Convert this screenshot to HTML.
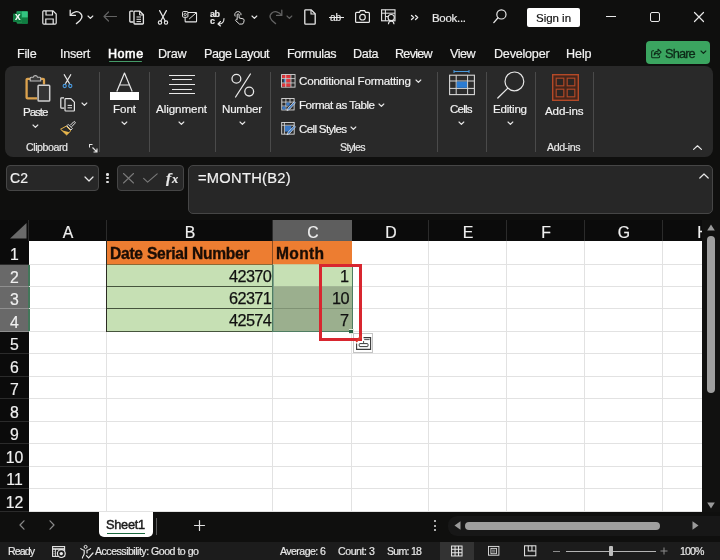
<!DOCTYPE html>
<html lang="en">
<head>
<meta charset="utf-8">
<title>Book1 - Excel</title>
<style>
*{box-sizing:border-box;margin:0;padding:0}
html,body{width:720px;height:560px;overflow:hidden;background:#0f0f0e}
body{position:relative;font-family:"Liberation Sans",sans-serif;color:#fff}
.abs{position:absolute}
.t{-webkit-text-stroke:0.18px;will-change:transform;position:absolute;white-space:nowrap;line-height:1.16;color:#f2f2f2}
svg{position:absolute;overflow:visible}
#ribbon{left:5px;top:66px;width:708px;height:91px;background:#292929;border-radius:8px}
.sep{position:absolute;top:72px;width:1px;height:80px;background:#4a4a4a}
.box{position:absolute;background:#272727;border:1px solid #464646;border-radius:4px}
#grid{left:0;top:220px;width:702px;height:292px;background:#fff;overflow:hidden}
.ch{position:absolute;top:0;background:#0b0b0b;border-right:1px solid #2b2b2b}
.ch.sel{background:#5e5e5e;border-right:0}
.rh{position:absolute;left:0;width:29px;background:#0b0b0b;border-bottom:1px solid #2b2b2b}
.rh.sel{background:#696969;width:30px;border-right:2px solid #42775a;border-bottom:1px solid #8f8f8f}
.vl{position:absolute;width:1px;height:271px;background:#e2e2e2}
.hl{position:absolute;left:29px;height:1px;width:673px;background:#e2e2e2}
#tabs{left:0;top:512px;width:720px;height:29px;background:#0f0f0e}
#status{left:0;top:541.5px;width:720px;height:19px;background:#1c1c1c}
.hb{-webkit-text-stroke:0.35px #1a0d05}
.nb{-webkit-text-stroke:0.25px #111}
.sb{-webkit-text-stroke:0.3px #0d2a18}
.sh{-webkit-text-stroke:0.45px #1a1a1a}
.hm{-webkit-text-stroke:0.55px #fff}

</style>
</head>
<body>
<svg style="left:13px;top:9.6px" width="15.2" height="15.2" viewBox="0 0 17 16"><rect x="4" y="1" width="12.5" height="14" rx="1.5" fill="#1e8f4e"/><rect x="10" y="1" width="6.5" height="7" fill="#33c481"/><rect x="10" y="8" width="6.5" height="7" fill="#107c41"/><rect x="4" y="1" width="6" height="7" fill="#21a366"/><rect x="0" y="3.5" width="9.5" height="9.5" rx="1" fill="#107c41"/></svg>
<div class="t" style="left:14.6px;top:12.9px;font-size:8.2px;font-weight:bold;color:#fff">X</div>
<svg style="left:42px;top:9.6px" width="15" height="15" viewBox="0 0 15 15"><path d="M1.5 0.8H11L14.2 4V13A1.2 1.2 0 0 1 13 14.2H2A1.2 1.2 0 0 1 0.8 13V2A1.2 1.2 0 0 1 1.5 0.8Z" fill="none" stroke="#e8e8e8" stroke-width="1.2"/><path d="M4 1V5H10.5V1" fill="none" stroke="#e8e8e8" stroke-width="1.2"/><path d="M3.8 14V9H11.2V14" fill="none" stroke="#e8e8e8" stroke-width="1.2"/></svg>
<svg style="left:69px;top:9.3px" width="15" height="16" viewBox="0 0 15 16"><path d="M1.2 1.2V6.4H6.4" fill="none" stroke="#e8e8e8" stroke-width="1.3" stroke-linecap="round" stroke-linejoin="round"/><path d="M1.6 6C4 2.6 8.6 1.6 11.4 4.2C14.2 6.8 13.4 10.6 7.4 14.6" fill="none" stroke="#e8e8e8" stroke-width="1.3" stroke-linecap="round"/></svg>
<svg style="left:88.1px;top:15.600000000000001px" width="4.8" height="2.4" viewBox="0 0 4.8 2.4"><path d="M0 0L2.4 2.4L4.8 0" fill="none" stroke="#e8e8e8" stroke-width="1.15" stroke-linecap="round" stroke-linejoin="round"/></svg>
<svg style="left:103.3px;top:11.2px" width="14" height="11" viewBox="0 0 14 11"><path d="M13.5 5.5H1M5.5 1L1 5.5L5.5 10" fill="none" stroke="#636363" stroke-width="1.2" stroke-linecap="round" stroke-linejoin="round"/></svg>
<svg style="left:129px;top:9.3px" width="16" height="16" viewBox="0 0 16 16"><path d="M4.2 2.2H1.6A0.8 0.8 0 0 0 0.8 3V12.2A0.8 0.8 0 0 0 1.6 13H4.4" fill="none" stroke="#e8e8e8" stroke-width="1.3"/><path d="M5.8 2.2H10.8L14.4 5.8V14.2A0.8 0.8 0 0 1 13.6 15H5.8A0.8 0.8 0 0 1 5 14.2V3A0.8 0.8 0 0 1 5.8 2.2Z" fill="none" stroke="#e8e8e8" stroke-width="1.3"/><path d="M7.5 8H12M7.5 10.3H12M7.5 12.6H12" stroke="#e8e8e8" stroke-width="1"/><path d="M10.6 2.4V6H14.2" fill="none" stroke="#e8e8e8" stroke-width="1"/></svg>
<svg style="left:157px;top:9.6px" width="11.4" height="15.2" viewBox="0 0 11.4 15.2"><path d="M2.6 0.6L8.2 11M9.4 0.6L3.8 11" stroke="#e8e8e8" stroke-width="1.2" stroke-linecap="round"/><circle cx="3" cy="12.6" r="1.7" fill="none" stroke="#e8e8e8" stroke-width="1.1"/><circle cx="9" cy="12.6" r="1.7" fill="none" stroke="#e8e8e8" stroke-width="1.1"/></svg>
<svg style="left:181.8px;top:10.5px" width="15.2" height="11.6" viewBox="0 0 17 13"><rect x="3.5" y="1.6" width="12.8" height="10.6" rx="0.8" fill="none" stroke="#e8e8e8" stroke-width="1.2"/><path d="M8 9L16 2" stroke="#e8e8e8" stroke-width="1.1"/><rect x="0.6" y="0.6" width="6" height="6.4" rx="1" fill="#0f0f0e" stroke="#e8e8e8" stroke-width="1.1"/><circle cx="3.6" cy="3.8" r="1.3" fill="none" stroke="#e8e8e8" stroke-width="1"/></svg>
<div class="t" style="left:210px;top:9px;font-size:9px;font-weight:bold;color:#ececec;letter-spacing:-0.5px">ab</div>
<div class="t" style="left:210px;top:16px;font-size:9px;font-weight:bold;color:#ececec">c</div>
<svg style="left:215px;top:18.3px" width="10" height="8" viewBox="0 0 10 8"><path d="M9 0.5C9 4 7 6 3.5 6M5.5 3.5L3 6L5.5 8" fill="none" stroke="#e8e8e8" stroke-width="1.1" stroke-linecap="round" stroke-linejoin="round"/></svg>
<svg style="left:233px;top:9.5px" width="12.2" height="15.6" viewBox="0 0 14 16"><path d="M2.6 6.4A3.6 3.6 0 1 1 9.2 5" fill="none" stroke="#e8e8e8" stroke-width="1.1"/><path d="M4.8 9.5V4.6A1.1 1.1 0 0 1 7 4.6V8.2L11.6 9.2A1.6 1.6 0 0 1 12.8 10.8L12.2 13.6A2 2 0 0 1 10.2 15.2H7.4L3.2 11.4A1 1 0 0 1 4.8 10.2Z" fill="none" stroke="#e8e8e8" stroke-width="1.1" stroke-linejoin="round"/></svg>
<svg style="left:252.1px;top:15.600000000000001px" width="4.8" height="2.4" viewBox="0 0 4.8 2.4"><path d="M0 0L2.4 2.4L4.8 0" fill="none" stroke="#e8e8e8" stroke-width="1.15" stroke-linecap="round" stroke-linejoin="round"/></svg>
<svg style="left:268px;top:9.3px" width="15" height="16" viewBox="0 0 15 16"><path d="M13.8 1.2V6.4H8.6" fill="none" stroke="#636363" stroke-width="1.3" stroke-linecap="round" stroke-linejoin="round"/><path d="M13.4 6C11 2.6 6.4 1.6 3.6 4.2C0.8 6.8 1.6 10.6 7.6 14.6" fill="none" stroke="#636363" stroke-width="1.3" stroke-linecap="round"/></svg>
<svg style="left:287.1px;top:15.600000000000001px" width="4.8" height="2.4" viewBox="0 0 4.8 2.4"><path d="M0 0L2.4 2.4L4.8 0" fill="none" stroke="#636363" stroke-width="1.15" stroke-linecap="round" stroke-linejoin="round"/></svg>
<svg style="left:304px;top:9.3px" width="12" height="16" viewBox="0 0 12 16"><path d="M1.6 0.8H7.2L11.2 4.8V14.4A0.8 0.8 0 0 1 10.4 15.2H1.6A0.8 0.8 0 0 1 0.8 14.4V1.6A0.8 0.8 0 0 1 1.6 0.8Z" fill="none" stroke="#e8e8e8" stroke-width="1.3"/><path d="M7 1V5H11" fill="none" stroke="#e8e8e8" stroke-width="1.1"/></svg>
<div class="t" style="left:330.3px;top:11.6px;font-size:10.2px;color:#e8e8e8;letter-spacing:-0.1px">ab</div>
<div class="abs" style="left:328.5px;top:17px;width:15.5px;height:1px;background:#e8e8e8"></div>
<svg style="left:355px;top:10.3px" width="15" height="14" viewBox="0 0 15 14"><path d="M0.6 3.4V11.4A1 1 0 0 0 1.6 12.4H13.4A1 1 0 0 0 14.4 11.4V3.4A1 1 0 0 0 13.4 2.4H10.6L9.6 0.6H5.4L4.4 2.4H1.6A1 1 0 0 0 0.6 3.4Z" fill="none" stroke="#e8e8e8" stroke-width="1.2"/><circle cx="7.5" cy="7.2" r="2.8" fill="none" stroke="#e8e8e8" stroke-width="1.2"/></svg>
<svg style="left:381px;top:9.3px" width="16" height="16" viewBox="0 0 16 16"><rect x="0.6" y="0.8" width="13.4" height="11" fill="none" stroke="#e8e8e8" stroke-width="1.1"/><path d="M0.6 4.2H14M4.4 0.8V11.8M4.4 7.6H8" stroke="#e8e8e8" stroke-width="1"/><circle cx="10.2" cy="8.6" r="3.1" fill="#0f0f0e" stroke="#e8e8e8" stroke-width="1.2"/><path d="M7.4 15.2C7.6 12.8 8.8 12 10.2 12C11.6 12 12.8 12.8 13 15.2" fill="none" stroke="#e8e8e8" stroke-width="1.1"/></svg>
<svg style="left:411px;top:15.4px" width="7.4" height="4.8" viewBox="0 0 7.4 4.8"><path d="M0.5 0.5L2.7 2.5L0.5 4.5M4.5 0.5L6.7 2.5L4.5 4.5" fill="none" stroke="#e8e8e8" stroke-width="1.3" stroke-linecap="round" stroke-linejoin="round"/></svg>
<div id="t2" class="t " style="left:432.43px;top:11.62px;font-size:11.5px;color:#eaeaea;letter-spacing:-0.296px;">Book...</div>
<svg style="left:493px;top:9.3px" width="14" height="15" viewBox="0 0 14 15"><circle cx="8.4" cy="5.4" r="4.6" fill="none" stroke="#e8e8e8" stroke-width="1.2"/><path d="M5 8.8L0.8 13.6" stroke="#e8e8e8" stroke-width="1.3" stroke-linecap="round"/></svg>
<div class="abs" style="left:527px;top:8px;width:53px;height:19px;background:#fff;border-radius:2px"></div>
<div id="t3" class="t " style="left:535.92px;top:11.62px;font-size:11.5px;color:#111;letter-spacing:-0.023px;">Sign in</div>
<div class="abs" style="left:606px;top:16px;width:10px;height:1.2px;background:#e8e8e8"></div>
<div class="abs" style="left:650px;top:12px;width:10px;height:10px;border:1.2px solid #e8e8e8;border-radius:2px"></div>
<svg style="left:694px;top:12.4px" width="10" height="10" viewBox="0 0 10 10"><path d="M0.5 0.5L9.5 9.5M9.5 0.5L0.5 9.5" stroke="#e8e8e8" stroke-width="1.2" stroke-linecap="round"/></svg>
<div id="t4" class="t " style="left:17.37px;top:47.01px;font-size:12.6px;color:#f2f2f2;letter-spacing:-0.221px;">File</div>
<div id="t5" class="t " style="left:60.37px;top:47.01px;font-size:12.6px;color:#f2f2f2;letter-spacing:-0.273px;">Insert</div>
<div id="t6" class="t hm" style="left:107.87px;top:47.01px;font-size:12.6px;color:#ffffff;letter-spacing:0.513px;">Home</div>
<div class="abs" style="left:109px;top:60.6px;width:33px;height:1.8px;background:#459a68;border-radius:1px"></div>
<div id="t7" class="t " style="left:158.37px;top:47.01px;font-size:12.6px;color:#f2f2f2;letter-spacing:-0.252px;">Draw</div>
<div id="t8" class="t " style="left:203.87px;top:47.01px;font-size:12.6px;color:#f2f2f2;letter-spacing:-0.510px;">Page Layout</div>
<div id="t9" class="t " style="left:287.37px;top:47.01px;font-size:12.6px;color:#f2f2f2;letter-spacing:-0.407px;">Formulas</div>
<div id="t10" class="t " style="left:353.37px;top:47.01px;font-size:12.6px;color:#f2f2f2;letter-spacing:-0.325px;">Data</div>
<div id="t11" class="t " style="left:395.37px;top:47.01px;font-size:12.6px;color:#f2f2f2;letter-spacing:-0.733px;">Review</div>
<div id="t12" class="t " style="left:450.37px;top:47.01px;font-size:12.6px;color:#f2f2f2;letter-spacing:-0.481px;">View</div>
<div id="t13" class="t " style="left:493.87px;top:47.01px;font-size:12.6px;color:#f2f2f2;letter-spacing:-0.222px;">Developer</div>
<div id="t14" class="t " style="left:566.37px;top:47.01px;font-size:12.6px;color:#f2f2f2;letter-spacing:-0.091px;">Help</div>
<div class="abs" style="left:646px;top:41px;width:64px;height:23px;background:#3ba560;border-radius:4px"></div>
<svg style="left:651px;top:47.5px" width="10.5" height="10.5" viewBox="0 0 12 12"><path d="M3.4 3.2H2A1.2 1.2 0 0 0 0.8 4.4V10A1.2 1.2 0 0 0 2 11.2H8.6A1.2 1.2 0 0 0 9.8 10V8.6" fill="none" stroke="#0d2a18" stroke-width="1.2"/><path d="M3.6 8C3.8 5.4 5.4 3.8 8 3.8V1.4L11.6 4.8L8 8.2V5.8C6 5.8 4.6 6.4 3.6 8Z" fill="none" stroke="#0d2a18" stroke-width="1.2" stroke-linejoin="round"/></svg>
<div id="t15" class="t sb" style="left:664.86px;top:46.58px;font-size:12.8px;color:#0d2a18;letter-spacing:-0.876px;">Share</div>
<svg style="left:700.5px;top:51.4px" width="4.8" height="2.4" viewBox="0 0 4.8 2.4"><path d="M0 0L2.4 2.4L4.8 0" fill="none" stroke="#0d2a18" stroke-width="1.15" stroke-linecap="round" stroke-linejoin="round"/></svg>
<div id="ribbon" class="abs"></div>
<div class="sep" style="left:99px"></div>
<div class="sep" style="left:149px"></div>
<div class="sep" style="left:215px"></div>
<div class="sep" style="left:270px"></div>
<div class="sep" style="left:437px"></div>
<div class="sep" style="left:486px"></div>
<div class="sep" style="left:535px"></div>
<div class="sep" style="left:593px"></div>
<svg style="left:24px;top:72px" width="28" height="31" viewBox="0 0 28 31"><path d="M7 6.8H3.6A1 1 0 0 0 2.6 7.8V25.4A1 1 0 0 0 3.6 26.4H13" fill="none" stroke="#dba24e" stroke-width="2.3"/><path d="M16 6.8H19A1 1 0 0 1 20 7.8V12.4" fill="none" stroke="#dba24e" stroke-width="2.3"/><path d="M6.2 9V6.2A0.9 0.9 0 0 1 7.1 5.3H9.2A2.3 2.3 0 0 1 13.6 5.3H15.8A0.9 0.9 0 0 1 16.7 6.2V9Z" fill="#3a3a3a" stroke="#bdbdbd" stroke-width="1.1"/><rect x="14.1" y="13.2" width="11.6" height="15.8" rx="0.8" fill="#353535" stroke="#cfcfcf" stroke-width="1.5"/></svg>
<div id="t16" class="t " style="left:23.02px;top:105.15px;font-size:11.6px;color:#f2f2f2;letter-spacing:-1.053px;">Paste</div>
<svg style="left:33.1px;top:125.3px" width="4.8" height="2.4" viewBox="0 0 4.8 2.4"><path d="M0 0L2.4 2.4L4.8 0" fill="none" stroke="#e8e8e8" stroke-width="1.15" stroke-linecap="round" stroke-linejoin="round"/></svg>
<svg style="left:62px;top:74px" width="11" height="15" viewBox="0 0 11 15"><path d="M2.2 0.6L7.4 9.4M8.8 0.6L3.6 9.4" stroke="#e8e8e8" stroke-width="1.1" stroke-linecap="round"/><circle cx="2.7" cy="12" r="1.6" fill="none" stroke="#4a9be0" stroke-width="1.1"/><circle cx="8.3" cy="12" r="1.6" fill="none" stroke="#4a9be0" stroke-width="1.1"/></svg>
<svg style="left:59.6px;top:96.4px" width="16" height="16" viewBox="0 0 16 16"><path d="M4 1.8H1.6A0.8 0.8 0 0 0 0.8 2.6V11.4A0.8 0.8 0 0 0 1.6 12.2H4.2" fill="none" stroke="#e8e8e8" stroke-width="1.2"/><path d="M5.8 2.6H10.8L14.4 6.2V14.2A0.8 0.8 0 0 1 13.6 15H5.8A0.8 0.8 0 0 1 5 14.2V3.4A0.8 0.8 0 0 1 5.8 2.6Z" fill="none" stroke="#e8e8e8" stroke-width="1.2"/><path d="M7.6 9.4H12M7.6 11.8H12" stroke="#e8e8e8" stroke-width="1"/></svg>
<svg style="left:82.1px;top:103.3px" width="4.8" height="2.4" viewBox="0 0 4.8 2.4"><path d="M0 0L2.4 2.4L4.8 0" fill="none" stroke="#e8e8e8" stroke-width="1.15" stroke-linecap="round" stroke-linejoin="round"/></svg>
<svg style="left:60px;top:120.6px" width="16" height="15" viewBox="0 0 16 15"><path d="M10.2 4.4L13.6 0.9A0.9 0.9 0 0 1 15 2.2L11.6 5.8" fill="none" stroke="#e4e4e4" stroke-width="1"/><path d="M8.2 3.4L12.4 7.6L11 9L6.8 4.8Z" fill="#2c2c2c" stroke="#e4e4e4" stroke-width="0.9" stroke-linejoin="round"/><path d="M6.2 5.2L10.8 9.8L6.6 13.9L0.6 8.2Z" fill="none" stroke="#e8b64c" stroke-width="1" stroke-linejoin="round"/><path d="M2.6 9.6L9.4 11.2L6.6 13.9L0.9 8.6Z" fill="#e8b64c"/></svg>
<div id="t17" class="t " style="left:26.47px;top:141.29px;font-size:10.6px;color:#e8e8e8;letter-spacing:-0.426px;">Clipboard</div>
<svg style="left:89px;top:144px" width="9" height="9" viewBox="0 0 9 9"><path d="M0.5 3V0.5H3M0.5 0.5" fill="none" stroke="#e8e8e8" stroke-width="1"/><path d="M0.5 3.5V0.5H3.5" fill="none" stroke="#e8e8e8" stroke-width="1"/><path d="M3.5 3.5L8 8M8 4.5V8H4.5" fill="none" stroke="#e8e8e8" stroke-width="1.1"/></svg>
<svg style="left:116px;top:72px" width="17" height="20" viewBox="0 0 17 20"><path d="M0.8 19.4L8.5 1L16.2 19.4M3.6 13H13.4" fill="none" stroke="#e8e8e8" stroke-width="1.2" stroke-linejoin="round"/></svg>
<div class="abs" style="left:110px;top:92.2px;width:29px;height:7.8px;background:#fff"></div>
<div id="t18" class="t " style="left:113.42px;top:102.15px;font-size:11.6px;color:#f2f2f2;letter-spacing:-0.053px;">Font</div>
<svg style="left:122.1px;top:122.3px" width="4.8" height="2.4" viewBox="0 0 4.8 2.4"><path d="M0 0L2.4 2.4L4.8 0" fill="none" stroke="#e8e8e8" stroke-width="1.15" stroke-linecap="round" stroke-linejoin="round"/></svg>
<div class="abs" style="left:169px;top:74.7px;width:26px;height:1.2px;background:#e8e8e8"></div>
<div class="abs" style="left:172px;top:79.3px;width:20px;height:1.2px;background:#e8e8e8"></div>
<div class="abs" style="left:169px;top:83.9px;width:26px;height:1.2px;background:#e8e8e8"></div>
<div class="abs" style="left:172px;top:88.5px;width:20px;height:1.2px;background:#e8e8e8"></div>
<div class="abs" style="left:169px;top:93.1px;width:26px;height:1.2px;background:#e8e8e8"></div>
<div id="t19" class="t " style="left:156.42px;top:102.15px;font-size:11.6px;color:#f2f2f2;letter-spacing:-0.065px;">Alignment</div>
<svg style="left:179.1px;top:122.3px" width="4.8" height="2.4" viewBox="0 0 4.8 2.4"><path d="M0 0L2.4 2.4L4.8 0" fill="none" stroke="#e8e8e8" stroke-width="1.15" stroke-linecap="round" stroke-linejoin="round"/></svg>
<svg style="left:231px;top:73px" width="24" height="25" viewBox="0 0 24 25"><circle cx="5.4" cy="5.8" r="4.4" fill="none" stroke="#e8e8e8" stroke-width="1.3"/><circle cx="18.2" cy="18.6" r="4.4" fill="none" stroke="#e8e8e8" stroke-width="1.3"/><path d="M19.4 1L4.6 24" stroke="#e8e8e8" stroke-width="1.3" stroke-linecap="round"/></svg>
<div id="t20" class="t " style="left:222.42px;top:102.15px;font-size:11.6px;color:#f2f2f2;letter-spacing:-0.241px;">Number</div>
<svg style="left:240.1px;top:122.3px" width="4.8" height="2.4" viewBox="0 0 4.8 2.4"><path d="M0 0L2.4 2.4L4.8 0" fill="none" stroke="#e8e8e8" stroke-width="1.15" stroke-linecap="round" stroke-linejoin="round"/></svg>
<svg style="left:281.4px;top:73.8px" width="14.6" height="13.7" viewBox="0 0 16 15"><rect x="0.6" y="0.6" width="14.8" height="13.8" fill="#2c2c2c" stroke="#d6d6d6" stroke-width="1"/><rect x="1.2" y="1.2" width="9.4" height="3.4" fill="#e0353b"/><rect x="1.2" y="10.2" width="9.4" height="3.6" fill="#e0353b"/><rect x="5.4" y="5.4" width="5.2" height="4" fill="#e0353b"/><rect x="3" y="5.4" width="2.2" height="4" fill="#3b78c4"/><path d="M0.6 5H15.4M0.6 9.8H15.4M5.2 0.6V14.4M10.9 0.6V14.4" stroke="#d6d6d6" stroke-width="0.9"/></svg>
<div id="t21" class="t " style="left:299.42px;top:74.15px;font-size:11.6px;color:#f2f2f2;letter-spacing:-0.219px;">Conditional Formatting</div>
<svg style="left:416.1px;top:80.3px" width="4.8" height="2.4" viewBox="0 0 4.8 2.4"><path d="M0 0L2.4 2.4L4.8 0" fill="none" stroke="#e8e8e8" stroke-width="1.15" stroke-linecap="round" stroke-linejoin="round"/></svg>
<svg style="left:281.4px;top:98.1px" width="14.8" height="13.4" viewBox="0 0 16 15"><rect x="0.6" y="0.6" width="13.8" height="12.8" fill="#2c2c2c" stroke="#dcdcdc" stroke-width="1"/><path d="M0.6 4.6H14.4M0.6 9H8M5.2 0.6V13.4M9.8 0.6V6" stroke="#dcdcdc" stroke-width="0.9"/><rect x="5.7" y="5.1" width="3.8" height="3.5" fill="#3b78c4"/><rect x="1.2" y="9.5" width="3.6" height="3.4" fill="#3b78c4"/><path d="M14.6 4.2L15.8 5.4L9.4 12.6L6.4 14.2L7.6 11.2Z" fill="#3b78c4" stroke="#e8e8e8" stroke-width="0.8" stroke-linejoin="round"/></svg>
<div id="t22" class="t " style="left:299.42px;top:98.15px;font-size:11.6px;color:#f2f2f2;letter-spacing:-0.491px;">Format as Table</div>
<svg style="left:379.1px;top:103.8px" width="4.8" height="2.4" viewBox="0 0 4.8 2.4"><path d="M0 0L2.4 2.4L4.8 0" fill="none" stroke="#e8e8e8" stroke-width="1.15" stroke-linecap="round" stroke-linejoin="round"/></svg>
<svg style="left:281.4px;top:122px" width="14.8" height="13.6" viewBox="0 0 16 15"><rect x="0.6" y="0.6" width="13.8" height="12.8" fill="#2c2c2c" stroke="#dcdcdc" stroke-width="1"/><path d="M0.6 3.6H14.4M3.6 0.6V13.4" stroke="#dcdcdc" stroke-width="0.9"/><rect x="4.2" y="4.2" width="7" height="6.4" fill="#3b78c4"/><path d="M14.6 4.2L15.8 5.4L9.4 12.6L6.4 14.2L7.6 11.2Z" fill="#3b78c4" stroke="#e8e8e8" stroke-width="0.8" stroke-linejoin="round"/></svg>
<div id="t23" class="t " style="left:299.42px;top:121.65px;font-size:11.6px;color:#f2f2f2;letter-spacing:-0.672px;">Cell Styles</div>
<svg style="left:351.1px;top:127.3px" width="4.8" height="2.4" viewBox="0 0 4.8 2.4"><path d="M0 0L2.4 2.4L4.8 0" fill="none" stroke="#e8e8e8" stroke-width="1.15" stroke-linecap="round" stroke-linejoin="round"/></svg>
<div id="t24" class="t " style="left:340.47px;top:141.29px;font-size:10.6px;color:#e8e8e8;letter-spacing:-0.681px;">Styles</div>
<svg style="left:449px;top:70px" width="26" height="25" viewBox="0 0 26 25"><path d="M5 1.5H20M5 0V3M20 0V3" stroke="#4a9be0" stroke-width="1"/><rect x="0.6" y="5.2" width="24.8" height="19.4" fill="#2c2c2c" stroke="#d8d8d8" stroke-width="1.1"/><path d="M0.6 11H25.4M0.6 18.4H25.4M7.2 5.2V24.6M18.6 5.2V24.6" stroke="#d8d8d8" stroke-width="1"/><rect x="7.8" y="11.6" width="10.2" height="6.2" fill="#2b7cd3"/></svg>
<div id="t25" class="t " style="left:450.42px;top:102.15px;font-size:11.6px;color:#f2f2f2;letter-spacing:-0.809px;">Cells</div>
<svg style="left:459.1px;top:122.3px" width="4.8" height="2.4" viewBox="0 0 4.8 2.4"><path d="M0 0L2.4 2.4L4.8 0" fill="none" stroke="#e8e8e8" stroke-width="1.15" stroke-linecap="round" stroke-linejoin="round"/></svg>
<svg style="left:497px;top:71px" width="29" height="27" viewBox="0 0 29 27"><circle cx="17.4" cy="10.4" r="9.4" fill="none" stroke="#e8e8e8" stroke-width="1.2"/><path d="M10.6 17.4L0.8 27" stroke="#e8e8e8" stroke-width="1.3" stroke-linecap="round"/></svg>
<div id="t26" class="t " style="left:493.42px;top:102.15px;font-size:11.6px;color:#f2f2f2;letter-spacing:-0.235px;">Editing</div>
<svg style="left:508.1px;top:122.3px" width="4.8" height="2.4" viewBox="0 0 4.8 2.4"><path d="M0 0L2.4 2.4L4.8 0" fill="none" stroke="#e8e8e8" stroke-width="1.15" stroke-linecap="round" stroke-linejoin="round"/></svg>
<svg style="left:552px;top:74px" width="27" height="27" viewBox="0 0 27 27"><rect x="0.7" y="0.7" width="25.6" height="25.6" fill="#45261b" stroke="#b44a28" stroke-width="1.4"/><rect x="4.2" y="4.2" width="7.6" height="7.6" fill="#2a2624" stroke="#b44a28" stroke-width="1.1"/><rect x="15.2" y="4.2" width="7.6" height="7.6" fill="#2a2624" stroke="#b44a28" stroke-width="1.1"/><rect x="4.2" y="15.2" width="7.6" height="7.6" fill="#2a2624" stroke="#b44a28" stroke-width="1.1"/><rect x="15.2" y="15.2" width="7.6" height="7.6" fill="#2a2624" stroke="#b44a28" stroke-width="1.1"/></svg>
<div id="t27" class="t " style="left:544.92px;top:103.65px;font-size:11.6px;color:#f2f2f2;letter-spacing:-0.128px;">Add-ins</div>
<div id="t28" class="t " style="left:547.47px;top:141.29px;font-size:10.6px;color:#e8e8e8;letter-spacing:-0.411px;">Add-ins</div>
<svg style="left:693px;top:145px" width="9" height="5" viewBox="0 0 9 5"><path d="M0.6 4.4L4.5 0.8L8.4 4.4" fill="none" stroke="#e8e8e8" stroke-width="1.2" stroke-linecap="round" stroke-linejoin="round"/></svg>
<div class="box" style="left:6px;top:165px;width:93px;height:26px"></div>
<div id="t29" class="t " style="left:9.90px;top:170.31px;font-size:14px;color:#f2f2f2;letter-spacing:0.154px;">C2</div>
<svg style="left:84.5px;top:176.5px" width="8" height="4" viewBox="0 0 8 4"><path d="M0 0L4.0 4L8 0" fill="none" stroke="#e8e8e8" stroke-width="1.2" stroke-linecap="round" stroke-linejoin="round"/></svg>
<div class="abs" style="left:106.4px;top:173.0px;width:2.6px;height:2.6px;background:#e0e0e0;border-radius:50%"></div>
<div class="abs" style="left:106.4px;top:176.8px;width:2.6px;height:2.6px;background:#e0e0e0;border-radius:50%"></div>
<div class="abs" style="left:106.4px;top:180.5px;width:2.6px;height:2.6px;background:#e0e0e0;border-radius:50%"></div>
<div class="box" style="left:117px;top:165px;width:67px;height:26px"></div>
<svg style="left:123px;top:173px" width="11" height="10.5" viewBox="0 0 11 10.5"><path d="M0.5 0.5L10.5 10M10.5 0.5L0.5 10" stroke="#7a7a7a" stroke-width="1.1" stroke-linecap="round"/></svg>
<svg style="left:143px;top:173px" width="15" height="10" viewBox="0 0 15 10"><path d="M0.6 5.4L4.6 9.2L14.2 0.8" fill="none" stroke="#7a7a7a" stroke-width="1.1" stroke-linecap="round" stroke-linejoin="round"/></svg>
<div class="t" style="left:166px;top:168.6px;font-size:15.5px;font-weight:bold;font-style:italic;font-family:'Liberation Serif',serif;color:#e8e8e8;letter-spacing:-0.5px">f</div>
<div class="t" style="left:171.6px;top:172px;font-size:12.5px;font-weight:bold;font-style:italic;font-family:'Liberation Serif',serif;color:#e8e8e8">x</div>
<div class="box" style="left:188px;top:165px;width:525px;height:49px;border-radius:5px"></div>
<div id="t30" class="t " style="left:198.46px;top:170.16px;font-size:14.7px;color:#f2f2f2;letter-spacing:0.272px;">=MONTH(B2)</div>
<svg style="left:699px;top:173px" width="10" height="6" viewBox="0 0 10 6"><path d="M0.8 5L5 1L9.2 5" fill="none" stroke="#e8e8e8" stroke-width="1.2" stroke-linecap="round" stroke-linejoin="round"/></svg>
<div id="grid" class="abs">
<div class="ch" style="left:0;width:29px;height:21px"></div>
<svg style="left:9px;top:3px" width="18" height="16" viewBox="0 0 18 16"><path d="M17.5 0V15.5H1Z" fill="#6a6a6a"/></svg>
<div class="ch" style="left:29px;width:78px;height:21px"></div>
<div class="ch" style="left:107px;width:166px;height:21px"></div>
<div class="ch sel" style="left:273px;width:79px;height:21px"></div>
<div class="ch" style="left:352px;width:77px;height:21px"></div>
<div class="ch" style="left:429px;width:78px;height:21px"></div>
<div class="ch" style="left:507px;width:78px;height:21px"></div>
<div class="ch" style="left:585px;width:78px;height:21px"></div>
<div class="ch" style="left:663px;width:78px;height:21px"></div>
<div class="rh" style="top:21px;height:24px"></div>
<div class="rh sel" style="top:45px;height:22px"></div>
<div class="rh sel" style="top:67px;height:22px"></div>
<div class="rh sel" style="top:89px;height:23px"></div>
<div class="rh" style="top:112px;height:22px"></div>
<div class="rh" style="top:134px;height:23px"></div>
<div class="rh" style="top:157px;height:22px"></div>
<div class="rh" style="top:179px;height:23px"></div>
<div class="rh" style="top:202px;height:22px"></div>
<div class="rh" style="top:224px;height:23px"></div>
<div class="rh" style="top:247px;height:22px"></div>
<div class="rh" style="top:269px;height:23px"></div>
<div class="vl" style="left:106px;top:21px"></div>
<div class="vl" style="left:272px;top:21px"></div>
<div class="vl" style="left:351px;top:21px"></div>
<div class="vl" style="left:428px;top:21px"></div>
<div class="vl" style="left:506px;top:21px"></div>
<div class="vl" style="left:584px;top:21px"></div>
<div class="vl" style="left:662px;top:21px"></div>
<div class="hl" style="top:44px"></div>
<div class="hl" style="top:66px"></div>
<div class="hl" style="top:88px"></div>
<div class="hl" style="top:111px"></div>
<div class="hl" style="top:133px"></div>
<div class="hl" style="top:156px"></div>
<div class="hl" style="top:178px"></div>
<div class="hl" style="top:201px"></div>
<div class="hl" style="top:223px"></div>
<div class="hl" style="top:246px"></div>
<div class="hl" style="top:268px"></div>
<div class="hl" style="top:291px"></div>
<div class="abs" style="left:107px;top:21px;width:245px;height:24px;background:#ed7d31"></div>
<div class="abs" style="left:107px;top:45px;width:166px;height:67px;background:#c6e0b4"></div>
<div class="abs" style="left:273px;top:45px;width:79px;height:22px;background:#c6e0b4"></div>
<div class="abs" style="left:273px;top:67px;width:79px;height:45px;background:#9baf8e"></div>
<div class="abs" style="left:107px;top:66px;width:166px;height:1px;background:#46553d"></div>
<div class="abs" style="left:107px;top:88px;width:166px;height:1px;background:#46553d"></div>
<div class="abs" style="left:107px;top:111px;width:166px;height:1px;background:#46553d"></div>
<div class="abs" style="left:273px;top:66px;width:79px;height:1px;background:#a3b796"></div>
<div class="abs" style="left:273px;top:88px;width:79px;height:1px;background:#7f9274"></div>
<div class="abs" style="left:107px;top:44px;width:166px;height:1px;background:#8a6a38"></div>
<div class="abs" style="left:106px;top:21px;width:1px;height:91px;background:#2b2b22"></div>
<div class="abs" style="left:272px;top:21px;width:1px;height:24px;background:#8a4c20"></div>
<div class="abs" style="left:273px;top:44px;width:79px;height:1px;background:#c9c596"></div>
<div class="abs" style="left:272px;top:44px;width:81px;height:68px;border:1px solid #4f7d62;border-top-color:transparent"></div>
<div class="abs" style="left:273px;top:45px;width:1px;height:66px;background:#7fa08a"></div>
<div class="abs" style="left:348.5px;top:109px;width:5px;height:5px;background:#dfe9d8"></div>
<div class="abs" style="left:349.2px;top:109.7px;width:3.7px;height:3.6px;background:#2a6046"></div>
<div class="abs" style="left:352.8px;top:112.8px;width:20.5px;height:20.5px;background:#fff;border:1px solid #c4c4c4"></div>
<svg style="left:352.8px;top:112.8px" width="20" height="20" viewBox="0 0 20 20"><path d="M10.5 4.6H17.6V16.4H3.6V10.6" fill="none" stroke="#3a3a3a" stroke-width="1.1"/><path d="M11.2 6.6H16.6" stroke="#3a3a3a" stroke-width="0.9"/><path d="M10.6 8V10.4" stroke="#3a3a3a" stroke-width="0.9"/><rect x="6.2" y="10.6" width="8.8" height="3" rx="0.6" fill="#fff" stroke="#3a3a3a" stroke-width="1"/></svg>
<div class="abs" style="left:319px;top:44px;width:43px;height:77px;border:3px solid #d8262f"></div>
<svg style="left:355px;top:115px" width="8" height="9" viewBox="0 0 8 9"><path d="M5.5 0L0.6 6.6L1.8 7.6L7 2Z" fill="#dc3a2e"/></svg>
</div>
<div class="t" style="left:48.0px;width:40px;text-align:center;top:223.5px;font-size:15.8px;color:#f0f0f0">A</div>
<div class="t" style="left:170.0px;width:40px;text-align:center;top:223.5px;font-size:15.8px;color:#f0f0f0">B</div>
<div class="t" style="left:292.5px;width:40px;text-align:center;top:223.5px;font-size:15.8px;color:#f0f0f0">C</div>
<div class="t" style="left:370.5px;width:40px;text-align:center;top:223.5px;font-size:15.8px;color:#f0f0f0">D</div>
<div class="t" style="left:448.0px;width:40px;text-align:center;top:223.5px;font-size:15.8px;color:#f0f0f0">E</div>
<div class="t" style="left:526.0px;width:40px;text-align:center;top:223.5px;font-size:15.8px;color:#f0f0f0">F</div>
<div class="t" style="left:604.0px;width:40px;text-align:center;top:223.5px;font-size:15.8px;color:#f0f0f0">G</div>
<div class="t" style="left:682.6px;width:40px;text-align:center;top:223.5px;font-size:15.8px;color:#f0f0f0">H</div>
<div class="t" style="left:0;width:29px;text-align:center;top:246.0px;font-size:15.8px;color:#f0f0f0">1</div>
<div class="t" style="left:0;width:29px;text-align:center;top:269.0px;font-size:15.8px;color:#f0f0f0">2</div>
<div class="t" style="left:0;width:29px;text-align:center;top:291.0px;font-size:15.8px;color:#f0f0f0">3</div>
<div class="t" style="left:0;width:29px;text-align:center;top:313.5px;font-size:15.8px;color:#f0f0f0">4</div>
<div class="t" style="left:0;width:29px;text-align:center;top:336.0px;font-size:15.8px;color:#f0f0f0">5</div>
<div class="t" style="left:0;width:29px;text-align:center;top:358.5px;font-size:15.8px;color:#f0f0f0">6</div>
<div class="t" style="left:0;width:29px;text-align:center;top:381.0px;font-size:15.8px;color:#f0f0f0">7</div>
<div class="t" style="left:0;width:29px;text-align:center;top:403.5px;font-size:15.8px;color:#f0f0f0">8</div>
<div class="t" style="left:0;width:29px;text-align:center;top:426.0px;font-size:15.8px;color:#f0f0f0">9</div>
<div class="t" style="left:0;width:29px;text-align:center;top:448.5px;font-size:15.8px;color:#f0f0f0">10</div>
<div class="t" style="left:0;width:29px;text-align:center;top:471.0px;font-size:15.8px;color:#f0f0f0">11</div>
<div class="t" style="left:0;width:29px;text-align:center;top:493.5px;font-size:15.8px;color:#f0f0f0">12</div>
<div id="t31" class="t hb" style="left:109.82px;top:245.48px;font-size:15.6px;color:#1a0d05;font-weight:bold;letter-spacing:-0.251px;">Date Serial Number</div>
<div id="t32" class="t hb" style="left:276.42px;top:245.48px;font-size:15.6px;color:#1a0d05;font-weight:bold;letter-spacing:0.310px;">Month</div>
<div class="t nb" style="right:449.05px;top:266.8px;font-size:16.3px;letter-spacing:-0.6px;color:#111">42370</div>
<div class="t nb" style="right:371.05px;top:266.8px;font-size:16.3px;letter-spacing:-0.6px;color:#111">1</div>
<div class="t nb" style="right:449.05px;top:288.8px;font-size:16.3px;letter-spacing:-0.6px;color:#111">62371</div>
<div class="t nb" style="right:371.05px;top:288.8px;font-size:16.3px;letter-spacing:-0.6px;color:#111">10</div>
<div class="t nb" style="right:449.05px;top:311.3px;font-size:16.3px;letter-spacing:-0.6px;color:#111">42574</div>
<div class="t nb" style="right:371.05px;top:311.3px;font-size:16.3px;letter-spacing:-0.6px;color:#111">7</div>
<div class="abs" style="left:702px;top:220px;width:18px;height:292px;background:#111110"></div>
<svg style="left:707px;top:224px" width="8" height="7" viewBox="0 0 8 7"><path d="M4 0.5L7.8 6.5H0.2Z" fill="#9a9a9a"/></svg>
<div class="abs" style="left:707px;top:236px;width:8px;height:157px;background:#9e9e9e;border-radius:4px"></div>
<svg style="left:707px;top:502.4px" width="8" height="6.5" viewBox="0 0 8 6.5"><path d="M4 6.5L7.8 0.5H0.2Z" fill="#9a9a9a"/></svg>
<div id="tabs" class="abs"></div>
<svg style="left:19px;top:520px" width="6" height="10" viewBox="0 0 6 10"><path d="M5 0.8L1 5L5 9.2" fill="none" stroke="#8a8a8a" stroke-width="1.2" stroke-linecap="round" stroke-linejoin="round"/></svg>
<svg style="left:49px;top:520px" width="6" height="10" viewBox="0 0 6 10"><path d="M1 0.8L5 5L1 9.2" fill="none" stroke="#8a8a8a" stroke-width="1.2" stroke-linecap="round" stroke-linejoin="round"/></svg>
<div class="abs" style="left:99px;top:512px;width:54px;height:25px;background:#fff;border-radius:0 0 5px 5px"></div>
<div id="t33" class="t sh" style="left:106.36px;top:517.88px;font-size:12.8px;color:#1a1a1a;letter-spacing:-0.282px;">Sheet1</div>
<div class="abs" style="left:107px;top:532.5px;width:38px;height:1.7px;background:#1c6a40"></div>
<div class="abs" style="left:155.5px;top:518px;width:1px;height:17px;background:#5a5a5a"></div>
<svg style="left:194px;top:520px" width="11" height="11" viewBox="0 0 11 11"><path d="M5.5 0.5V10.5M0.5 5.5H10.5" stroke="#e0e0e0" stroke-width="1.2" stroke-linecap="round"/></svg>
<div class="abs" style="left:434px;top:520.4px;width:2px;height:2px;background:#e0e0e0;border-radius:1px"></div>
<div class="abs" style="left:434px;top:524.5px;width:2px;height:2px;background:#e0e0e0;border-radius:1px"></div>
<div class="abs" style="left:434px;top:528.6px;width:2px;height:2px;background:#e0e0e0;border-radius:1px"></div>
<div class="abs" style="left:448px;top:516px;width:272px;height:20px;background:#171717;border-radius:9px 0 0 9px"></div>
<svg style="left:454px;top:521px" width="7" height="9" viewBox="0 0 7 9"><path d="M0.5 4.5L6.5 0.3V8.7Z" fill="#9a9a9a"/></svg>
<div class="abs" style="left:465px;top:521.5px;width:195px;height:8px;background:#9e9e9e;border-radius:4px"></div>
<svg style="left:692px;top:521px" width="7" height="9" viewBox="0 0 7 9"><path d="M6.5 4.5L0.5 0.3V8.7Z" fill="#9a9a9a"/></svg>
<div id="status" class="abs"></div>
<div id="t34" class="t " style="left:8.47px;top:544.79px;font-size:10.6px;color:#e8e8e8;letter-spacing:-0.918px;">Ready</div>
<svg style="left:51.6px;top:546px" width="14" height="12" viewBox="0 0 14 12"><rect x="0.6" y="0.6" width="12" height="9.8" fill="none" stroke="#e8e8e8" stroke-width="1.1"/><path d="M0.6 3H12.6" stroke="#e8e8e8" stroke-width="1.6"/><path d="M3.4 3V10.4" stroke="#e8e8e8" stroke-width="0.9"/><path d="M1.6 5.6H2.6M1.6 7.8H2.6" stroke="#e8e8e8" stroke-width="0.8"/><circle cx="9.3" cy="7.6" r="3.9" fill="#1c1c1c" stroke="#e8e8e8" stroke-width="1.2"/><circle cx="9.3" cy="7.6" r="1.7" fill="#e8e8e8"/></svg>
<svg style="left:80px;top:545px" width="14" height="14" viewBox="0 0 14 14"><circle cx="5.6" cy="1.9" r="1.5" fill="none" stroke="#e8e8e8" stroke-width="1"/><path d="M0.8 3.6C2.4 5 3.6 5.2 4.2 5.4V8.6C4.2 10.4 2.6 11 2.4 13M10.6 3.6C9 5 7.6 5.2 7 5.4V8" fill="none" stroke="#e8e8e8" stroke-width="1.15" stroke-linecap="round" stroke-linejoin="round"/><path d="M6.4 10.6L8.6 12.8L13 8" fill="none" stroke="#e8e8e8" stroke-width="1.2" stroke-linecap="round" stroke-linejoin="round"/></svg>
<div id="t35" class="t " style="left:95.47px;top:544.79px;font-size:10.6px;color:#e8e8e8;letter-spacing:-0.502px;">Accessibility: Good to go</div>
<div id="t36" class="t " style="left:280.47px;top:544.79px;font-size:10.6px;color:#e8e8e8;letter-spacing:-0.566px;">Average: 6</div>
<div id="t37" class="t " style="left:338.47px;top:544.79px;font-size:10.6px;color:#e8e8e8;letter-spacing:-0.444px;">Count: 3</div>
<div id="t38" class="t " style="left:387.47px;top:544.79px;font-size:10.6px;color:#e8e8e8;letter-spacing:-0.750px;">Sum: 18</div>
<div class="abs" style="left:440px;top:541.5px;width:34px;height:19px;background:#333"></div>
<svg style="left:451px;top:544.6px" width="11.6" height="12" viewBox="0 0 12.6 12"><rect x="0.6" y="0.6" width="11.4" height="10.8" fill="none" stroke="#e8e8e8" stroke-width="1.1"/><path d="M4.4 0.6V11.4M8.2 0.6V11.4M0.6 4.2H12M0.6 7.8H12" stroke="#e8e8e8" stroke-width="1.1"/></svg>
<svg style="left:487.6px;top:544.8px" width="11.4" height="11.6" viewBox="0 0 14 12"><rect x="0.6" y="0.6" width="12.8" height="10.8" fill="none" stroke="#e8e8e8" stroke-width="1.1"/><rect x="3.6" y="3" width="6.8" height="6.6" fill="none" stroke="#e8e8e8" stroke-width="1"/><path d="M5 5.2H9M5 7.4H9" stroke="#e8e8e8" stroke-width="0.8"/></svg>
<svg style="left:523.6px;top:544.8px" width="12.4" height="11.6" viewBox="0 0 13.4 12"><rect x="0.6" y="0.6" width="12.2" height="10.8" fill="none" stroke="#e8e8e8" stroke-width="1.1"/><path d="M4.6 0.6V6.2H12.8M8.6 0.6V6.2" fill="none" stroke="#e8e8e8" stroke-width="1.1"/></svg>
<div class="abs" style="left:553px;top:550.5px;width:7px;height:1px;background:#8c8c8c"></div>
<div class="abs" style="left:566px;top:550.5px;width:90px;height:1px;background:#b4b4b4"></div>
<div class="abs" style="left:608.5px;top:546px;width:4px;height:10px;background:#bdbdbd;border-radius:1px"></div>
<svg style="left:660px;top:547px" width="8" height="8" viewBox="0 0 8 8"><path d="M4 0.5V7.5M0.5 4H7.5" stroke="#8c8c8c" stroke-width="1"/></svg>
<div id="t39" class="t " style="left:679.97px;top:544.79px;font-size:10.6px;color:#e8e8e8;letter-spacing:-0.885px;">100%</div>
</body>
</html>
